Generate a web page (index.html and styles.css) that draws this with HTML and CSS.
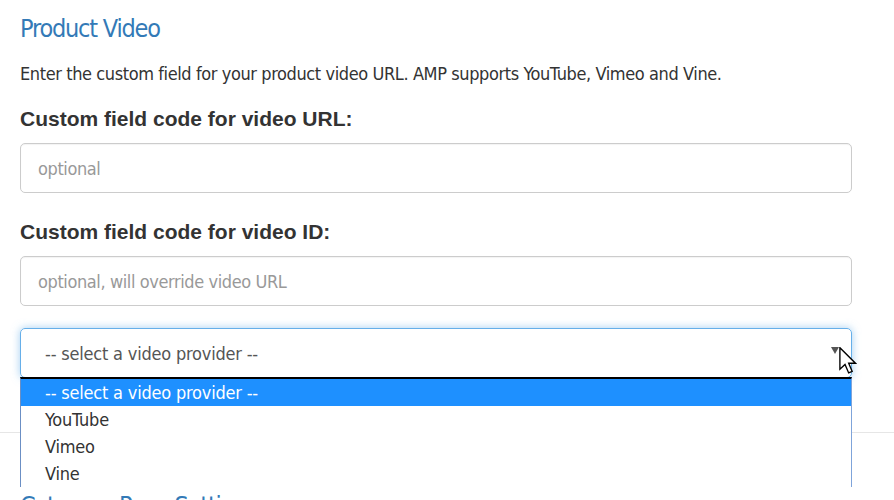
FILE: index.html
```html
<!DOCTYPE html>
<html lang="en">
<head>
<meta charset="utf-8">
<title>Product Video</title>
<link rel="stylesheet" href="styles.css">
</head>
<body>
<div class="page">
  <h3 class="section-title">Product Video</h3>
  <p class="help">Enter the custom field for your product video URL. AMP supports YouTube, Vimeo and Vine.</p>

  <div class="field">
    <label class="field-label">Custom field code for video URL:</label>
    <div class="input"><span class="placeholder">optional</span></div>
  </div>

  <div class="field">
    <label class="field-label">Custom field code for video ID:</label>
    <div class="input"><span class="placeholder">optional, will override video URL</span></div>
  </div>

  <div class="select-wrap">
    <div class="select">
      <span class="select-value">-- select a video provider --</span>
      <span class="select-arrow"></span>
    </div>
    <svg class="cursor" viewBox="0 0 13 20" width="18" height="27" aria-hidden="true">
      <path d="M0.5 0.5 L0.5 16.5 L4.3 12.9 L7 19.2 L9.6 18.1 L7 12 L12 12 Z" fill="#fff" stroke="#000" stroke-width="1" stroke-linejoin="miter"/>
    </svg>
    <ul class="options">
      <li class="option selected">-- select a video provider --</li>
      <li class="option">YouTube</li>
      <li class="option">Vimeo</li>
      <li class="option">Vine</li>
    </ul>
  </div>

  <hr class="divider">
  <h3 class="section-title next">Category Page Settings</h3>
</div>
</body>
</html>
```
FILE: styles.css
```css
html, body {
  margin: 0;
  padding: 0;
  background: #fff;
  overflow: hidden;
}
body {
  width: 894px;
  height: 500px;
  font-family: "DejaVu Sans Condensed", "Liberation Sans", sans-serif;
  color: #333;
}
.page {
  padding: 0 42px 0 20px;
}
.section-title {
  margin: 14px 0 0;
  font-size: 25px;
  line-height: 30px;
  letter-spacing: -1.2px;
  font-weight: normal;
  color: #337ab7;
}
.help {
  margin: 18px 0 0;
  font-size: 18px;
  line-height: 24px;
  letter-spacing: -0.4px;
  color: #333;
}
.field {
  margin-top: 21px;
}
.field + .field {
  margin-top: 27px;
}
.field-label {
  display: block;
  font-family: "Liberation Sans", Arial, sans-serif;
  font-weight: bold;
  font-size: 21px;
  line-height: 24px;
  color: #333;
  margin-bottom: 12px;
}
.input {
  box-sizing: border-box;
  height: 50px;
  border: 1px solid #ccc;
  border-radius: 5px;
  padding: 0 17px;
  display: flex;
  align-items: center;
  box-shadow: inset 0 1px 1px rgba(0,0,0,.05);
}
.placeholder {
  font-size: 18px;
  letter-spacing: -0.4px;
  color: #999;
}
.select-wrap {
  position: relative;
  margin-top: 22px;
}
.select {
  box-sizing: border-box;
  height: 50px;
  border: 1px solid #66afe9;
  border-radius: 5px;
  box-shadow: 0 0 8px rgba(102,175,233,.6);
  padding: 0 24px;
  display: flex;
  align-items: center;
  justify-content: space-between;
}
.select-value {
  font-size: 18px;
  letter-spacing: -0.2px;
  color: #555;
}
.select-arrow {
  width: 0;
  height: 0;
  border-left: 4px solid transparent;
  border-right: 4px solid transparent;
  border-top: 7px solid #555;
  margin-right: -12px;
  margin-bottom: 6px;
}
.cursor {
  position: absolute;
  left: 819px;
  top: 19px;
  z-index: 3;
}
.options {
  position: absolute;
  left: 0;
  right: 0;
  top: 49px;
  margin: 0;
  padding: 0;
  list-style: none;
  background: #fff;
  border-top: 2px solid #000;
  border-left: 1px solid #6b8fc4;
  border-right: 1px solid #7fa4da;
  z-index: 2;
}
.option {
  height: 27px;
  line-height: 27px;
  padding-left: 24px;
  font-size: 18px;
  letter-spacing: -0.2px;
  color: #333;
}
.option.selected {
  background: #1e90ff;
  color: #fff;
}
.divider {
  border: 0;
  border-top: 1px solid #e6e6e6;
  margin: 54px -42px 0 -20px;
}
.section-title.next {
  margin-top: 58px;
}
```
